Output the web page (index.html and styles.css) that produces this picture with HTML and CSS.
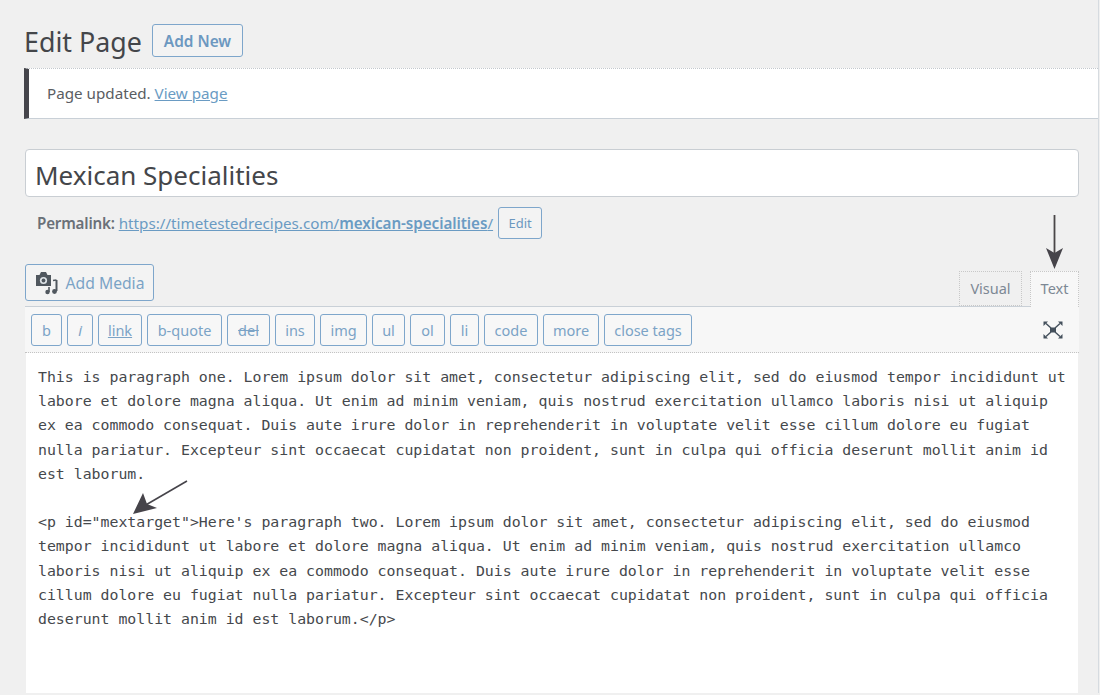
FILE: index.html
```html
<!DOCTYPE html>
<html lang="en">
<head>
<meta charset="utf-8">
<title>Edit Page</title>
<link rel="stylesheet" href="styles.css">
</head>
<body>
<div class="page">
  <div class="heading-row">
    <h1 class="page-title">Edit Page</h1>
    <a class="btn add-new">Add New</a>
  </div>
  <div class="notice">Page updated. <a class="link">View page</a></div>
  <div class="title-input">Mexican Specialities</div>
  <div class="permalink">
    <strong class="perma-label">Permalink:</strong>
    <a class="link perma-url">https://timetestedrecipes.com/<b>mexican-specialities</b>/</a>
    <a class="btn edit-btn">Edit</a>
  </div>
  <div class="editor-tools">
    <a class="btn add-media">
      <svg class="media-icon" viewBox="0 0 24 24" width="24" height="24" aria-hidden="true">
        <path fill="#50575e" d="M1 4h3.500l1.500-3h5l1.500 3H16v11H1z"/>
        <circle cx="8.500" cy="9.500" r="3.600" fill="#dfe4e8"/>
        <circle cx="8.500" cy="9.500" r="1.900" fill="#50575e"/>
        <path fill="none" stroke="#50575e" stroke-width="2" d="M21.500 9v11"/>
        <path fill="none" stroke="#50575e" stroke-width="1.600" d="M18 9.500l3.500-.5"/>
        <path fill="none" stroke="#50575e" stroke-width="1.600" d="M14 16v5"/>
        <circle cx="12.500" cy="21" r="2.200" fill="#50575e"/>
        <circle cx="19.500" cy="20.500" r="2.400" fill="#50575e"/>
      </svg>
      Add Media
    </a>
    <div class="tabs">
      <span class="tab">Visual</span>
      <span class="tab tab-active">Text</span>
    </div>
  </div>
  <div class="toolbar">
    <a class="tbtn tb-b">b</a>
    <a class="tbtn tb-i"><i>i</i></a>
    <a class="tbtn tb-link"><u>link</u></a>
    <a class="tbtn tb-quote">b-quote</a>
    <a class="tbtn tb-del"><s>del</s></a>
    <a class="tbtn tb-ins">ins</a>
    <a class="tbtn tb-img">img</a>
    <a class="tbtn tb-ul">ul</a>
    <a class="tbtn tb-ol">ol</a>
    <a class="tbtn tb-li">li</a>
    <a class="tbtn tb-code">code</a>
    <a class="tbtn tb-more">more</a>
    <a class="tbtn tb-close">close tags</a>
    <svg class="fullscreen" viewBox="0 0 22 20" width="22" height="20" aria-hidden="true">
      <rect x="8" y="7.500" width="6" height="5" fill="#44505c"/>
      <path stroke="#44505c" stroke-width="1.400" d="M4 3.500l5 4.500M18 3.500l-5 4.500M4 16.500l5-4.500M18 16.500l-5-4.500"/>
      <path fill="#44505c" d="M1.500 1.500h4.500L1.500 6zM20.500 1.500H16l4.500 4.500zM1.500 18.500H6l-4.500-4.500zM20.500 18.500H16l4.500-4.500z"/>
    </svg>
  </div>
  <div class="content">
    <p class="code-para">This is paragraph one. Lorem ipsum dolor sit amet, consectetur adipiscing elit, sed do eiusmod tempor incididunt ut labore et dolore magna aliqua. Ut enim ad minim veniam, quis nostrud exercitation ullamco laboris nisi ut aliquip ex ea commodo consequat. Duis aute irure dolor in reprehenderit in voluptate velit esse cillum dolore eu fugiat nulla pariatur. Excepteur sint occaecat cupidatat non proident, sunt in culpa qui officia deserunt mollit anim id est laborum.</p>
    <p class="code-para">&lt;p id="mextarget"&gt;Here's paragraph two. Lorem ipsum dolor sit amet, consectetur adipiscing elit, sed do eiusmod tempor incididunt ut labore et dolore magna aliqua. Ut enim ad minim veniam, quis nostrud exercitation ullamco laboris nisi ut aliquip ex ea commodo consequat. Duis aute irure dolor in reprehenderit in voluptate velit esse cillum dolore eu fugiat nulla pariatur. Excepteur sint occaecat cupidatat non proident, sunt in culpa qui officia deserunt mollit anim id est laborum.&lt;/p&gt;</p>
  </div>
</div>
<svg class="arrow arrow-down" viewBox="0 0 20 66" width="20" height="66" aria-hidden="true">
  <path d="M9.500 0v38" stroke="#4a4648" stroke-width="1.800"/>
  <path d="M1 33 L9.500 54 L18 33 L9.500 38z" fill="#46444a"/>
</svg>
<svg class="arrow arrow-diag" viewBox="0 0 60 36" width="60" height="36" aria-hidden="true">
  <path d="M57 1L14 26" stroke="#46444a" stroke-width="1.600"/>
  <path d="M3 34 L13 13 L17 24 L27 28z" fill="#46444a"/>
</svg>
</body>
</html>
```
FILE: styles.css
```css
* { box-sizing: border-box; }
html, body { margin: 0; padding: 0; }
body {
  width: 1100px;
  height: 695px;
  overflow: hidden;
  position: relative;
  background: #f0f0f0;
  font-family: "Noto Sans", "Open Sans", sans-serif;
  color: #44464a;
}
.page {
  height: 693px;
  overflow: hidden;
  padding: 24px 0 0 25px;
  margin-right: 1px;
  border-right: 1px solid #d6dbe0;
}
.heading-row {
  display: flex;
  align-items: center;
  height: 33px;
  gap: 10px;
}
.page-title {
  margin: 0 0 0 -1px;
  padding-top: 2px;
  font-size: 26.800px;
  font-weight: 400;
  line-height: 33px;
  width: 118px;
  white-space: nowrap;
}
.btn {
  display: inline-flex;
  align-items: center;
  justify-content: center;
  border: 1px solid #7ea6cb;
  border-radius: 3px;
  color: #6c98c0;
  background: #f3f3f3;
}
.add-new {
  width: 91px;
  height: 33px;
  padding-top: 2px;
  font-size: 15.400px;
  font-weight: 600;
}
.notice {
  margin: 11px 0 0 -1px;
  height: 51px;
  background: #fff;
  border-left: 5px solid #45454b;
  border-top: 1px dotted #c3c8cd;
  border-bottom: 1px solid #c9d0d7;
  padding-left: 18px;
  font-size: 15.200px;
  line-height: 49px;
  color: #5a5d62;
}
.link { color: #6a9bc3; text-decoration: underline; }
.title-input {
  margin-top: 30px;
  width: 1054px;
  height: 48px;
  background: #fff;
  border: 1px solid #c9ced3;
  border-radius: 4px;
  padding-left: 9px;
  font-size: 26px;
  line-height: 50px;
}
.permalink {
  display: flex;
  align-items: center;
  height: 32px;
  margin-top: 10px;
  padding-left: 12px;
  font-size: 15.200px;
  color: #6a7078;
  white-space: nowrap;
}
.perma-label { font-weight: 600; margin-right: 4px; letter-spacing: -0.200px; }
.perma-url b { font-weight: 600; letter-spacing: -0.050px; }
.edit-btn {
  width: 44px;
  height: 32px;
  margin-left: 5px;
  font-size: 13px;
}
.editor-tools {
  display: flex;
  justify-content: space-between;
  align-items: flex-end;
  width: 1054px;
  height: 42px;
  margin-top: 25px;
}
.add-media {
  width: 129px;
  height: 37px;
  margin-bottom: 5px;
  gap: 7px;
  font-size: 15.700px;
  color: #7ba3c6;
}
.tabs { display: flex; gap: 8px; align-items: flex-end; }
.tab {
  height: 35px;
  width: 63px;
  border: 1px dotted #c8c8c8;
  font-size: 14.500px;
  line-height: 32px;
  text-align: center;
  color: #7d8894;
}
.tab-active {
  width: 49px;
  background: #f7f7f7;
  border-bottom: 0;
  height: 36px;
  margin-bottom: -1px;
  position: relative;
}
.toolbar {
  display: flex;
  align-items: center;
  gap: 5px;
  width: 1054px;
  height: 47px;
  padding-left: 6px;
  background: #f7f7f7;
  border-top: 1px solid #c9d0d7;
  border-bottom: 1px dotted #c3c3c3;
}
.tbtn {
  display: block;
  height: 32px;
  border: 1px solid #7ea6cb;
  border-radius: 3px;
  background: #f7f7f7;
  color: #7ba3c6;
  font-size: 14.500px;
  line-height: 30px;
  text-align: center;
}
.tb-b { width: 31px; }
.tb-i { width: 26px; }
.tb-link { width: 44px; }
.tb-quote { width: 75px; }
.tb-del { width: 43px; }
.tb-ins { width: 40px; }
.tb-img { width: 47px; }
.tb-ul { width: 33px; }
.tb-ol { width: 35px; }
.tb-li { width: 29px; }
.tb-code { width: 54px; }
.tb-more { width: 56px; }
.tb-close { width: 88px; }
.fullscreen { margin-left: auto; margin-right: 15px; }
.content {
  width: 1052px;
  height: 341px;
  margin-left: 1px;
  background: #fff;
  padding: 12px 12px 0 12px;
}
.code-para {
  margin: 0 0 24.200px;
  font-family: "DejaVu Sans Mono", "Liberation Mono", monospace;
  font-size: 14.850px;
  line-height: 24.200px;
  color: #45484c;
}
.arrow { position: absolute; display: block; }
.arrow-down { left: 1045px; top: 215px; }
.arrow-diag { left: 130px; top: 480px; }
```
